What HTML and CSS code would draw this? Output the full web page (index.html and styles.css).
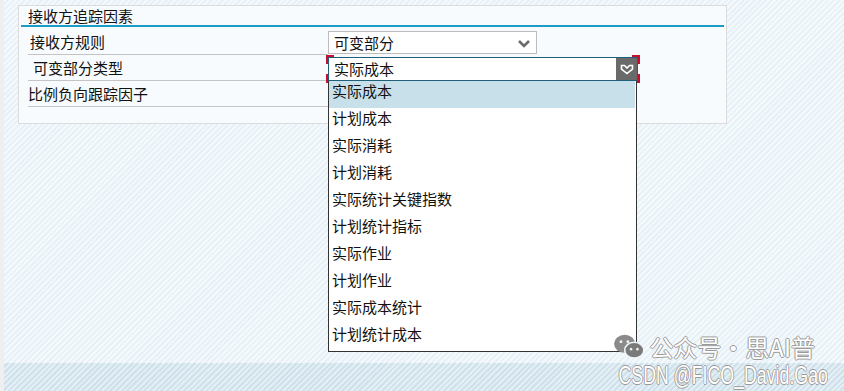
FILE: index.html
```html
<!DOCTYPE html>
<html lang="zh">
<head>
    <meta charset="UTF-8">
    <title>接收方追踪因素</title>
    <link rel="stylesheet" href="styles.css">
</head>
<body>
    <div class="page">
        <!-- Panel -->
        <div class="panel">
            <div class="panel-title">接收方追踪因素</div>
            <div class="rows">
                <div class="row">
                    <div class="label pad-a">接收方规则</div>
                    <div class="control">
                        <div class="select">
                            <span>可变部分</span>
                            <svg class="chev" width="12" height="8" viewBox="0 0 12 8"><path d="M1 1 L6 6 L11 1" fill="none" stroke="#6b6b6b" stroke-width="2.6"/></svg>
                        </div>
                    </div>
                </div>
                <div class="row">
                    <div class="label pad-b">可变部分类型</div>
                    <div class="control">
                        <div class="select-focus">
                            <span class="value">实际成本</span>
                            <span class="btn">
                                <svg width="14" height="11" viewBox="0 0 14 11"><path d="M1.5 1.5 H4.5 L7 4 L9.5 1.5 H12.5 V5 L7 9.5 L1.5 5 Z" fill="none" stroke="#fff" stroke-width="1.6"/></svg>
                            </span>
                            <i class="corner tl"></i><i class="corner tr"></i><i class="corner bl"></i><i class="corner br"></i>
                            <ul class="listbox">
                                <li class="active">实际成本</li>
                                <li>计划成本</li>
                                <li>实际消耗</li>
                                <li>计划消耗</li>
                                <li>实际统计关键指数</li>
                                <li>计划统计指标</li>
                                <li>实际作业</li>
                                <li>计划作业</li>
                                <li>实际成本统计</li>
                                <li>计划统计成本</li>
                            </ul>
                        </div>
                    </div>
                </div>
                <div class="row">
                    <div class="label pad-c">比例负向跟踪因子</div>
                    <div class="control"></div>
                </div>
            </div>
        </div>
    </div>

    <!-- Bottom band -->
    <div class="band"></div>

    <!-- Watermark -->
    <div class="watermark">
        <div class="wm-line1">
            <svg width="34" height="28" viewBox="0 0 32 26">
                <ellipse cx="11" cy="10" rx="10" ry="8.5" fill="#8a8a8a"/>
                <ellipse cx="20" cy="16" rx="9" ry="7.5" fill="#7a7a7a" stroke="#eef6fa" stroke-width="1.5"/>
                <circle cx="7.5" cy="8" r="1.4" fill="#eee"/>
                <circle cx="14" cy="8" r="1.4" fill="#eee"/>
                <circle cx="17" cy="15" r="1.2" fill="#eee"/>
                <circle cx="23" cy="15" r="1.2" fill="#eee"/>
            </svg>
            <span>公众号·思AI普</span>
        </div>
        <div class="wm-line2">CSDN @FICO_David.Gao</div>
    </div>
</body>
</html>
```

FILE: styles.css
```css
/* SAP style screen */
body {
    margin: 0;
    padding: 0;
    width: 844px;
    height: 391px;
    overflow: hidden;
    position: relative;
    font-family: "Noto Sans CJK SC", "Liberation Sans", sans-serif;
    font-size: 15px;
    color: #111;
    background-color: #efefef;
}
.page {
    margin-left: 4px;
    height: 358px;
    padding: 5px 0 0 14px;
    background: repeating-linear-gradient(135deg, #f3f9fc 0 2px, #e8f1f6 2px 4px);
}
.band {
    margin-left: 4px;
    height: 28px;
    background: repeating-linear-gradient(135deg, #e4eff5 0 2px, #cfe2ec 2px 4px);
}
.panel {
    width: 707px;
    height: 117px;
    border: 1px solid #dcdcdc;
    background-color: #f7fbfd;
}
.panel-title {
    height: 19px;
    line-height: 19px;
    margin: 0 2px;
    padding-left: 7px;
    border-bottom: 2px solid #1b9dc6;
}
.rows {
    padding-top: 2px;
}
.row {
    display: flex;
    height: 26px;
}
.label {
    width: 300px;
    margin-left: 9px;
    border-bottom: 1px solid #c4c4c4;
    line-height: 25px;
    box-sizing: border-box;
}
.pad-a { padding-left: 2px; }
.pad-b { padding-left: 5px; }
.pad-c { padding-left: 0; }
.control {
    padding-top: 2px;
}
.select {
    width: 209px;
    height: 23px;
    box-sizing: border-box;
    border: 1px solid #bdbdbd;
    background-color: #fff;
    display: flex;
    align-items: center;
    justify-content: space-between;
    padding: 0 6px 0 5px;
    line-height: 21px;
}
.chev {
    margin-top: 2px;
}
.select-focus {
    position: relative;
    width: 310px;
    height: 24px;
    box-sizing: border-box;
    border: 1px solid #1f5f7a;
    background-color: #fff;
    display: flex;
    align-items: stretch;
}
.select-focus .value {
    flex: 1;
    padding-left: 5px;
    line-height: 22px;
}
.btn {
    width: 21px;
    background-color: #6a6a6a;
    display: flex;
    align-items: center;
    justify-content: center;
}
.corner {
    position: absolute;
    width: 6px;
    height: 7px;
    border: 0 solid #c8102e;
}
.tl { left: -3px; top: -3px; border-left-width: 2px; border-top-width: 2px; }
.tr { right: -3px; top: -3px; border-right-width: 2px; border-top-width: 2px; }
.bl { left: -3px; bottom: -3px; border-left-width: 2px; border-bottom-width: 2px; }
.br { right: -3px; bottom: -3px; border-right-width: 2px; border-bottom-width: 2px; }
.listbox {
    position: absolute;
    left: -1px;
    top: 23px;
    width: 309px;
    margin: 0;
    padding: 0;
    list-style: none;
    box-sizing: border-box;
    border: 1px solid #333;
    border-top: 0;
    background-color: #fff;
}
.listbox li {
    height: 27px;
    line-height: 20px;
    padding-left: 3px;
}
.listbox li.active {
    background-color: #c7e0ea;
    margin-right: 1px;
}
.watermark {
    position: absolute;
    right: 16px;
    bottom: 3px;
    display: flex;
    flex-direction: column;
    align-items: flex-end;
    color: #fff;
    font-size: 24px;
    text-shadow: -1px 0 #999, 1px 0 #999, 0 -1px #999, 0 1px #999;
}
.wm-line1 {
    display: flex;
    align-items: center;
    gap: 2px;
    margin-right: 13px;
    margin-bottom: 3px;
    height: 26px;
    line-height: 26px;
}
.wm-line2 {
    font-family: "Liberation Sans", sans-serif;
    font-size: 25px;
    line-height: 25px;
    height: 25px;
    transform: scaleX(0.71);
    transform-origin: right center;
}
```
